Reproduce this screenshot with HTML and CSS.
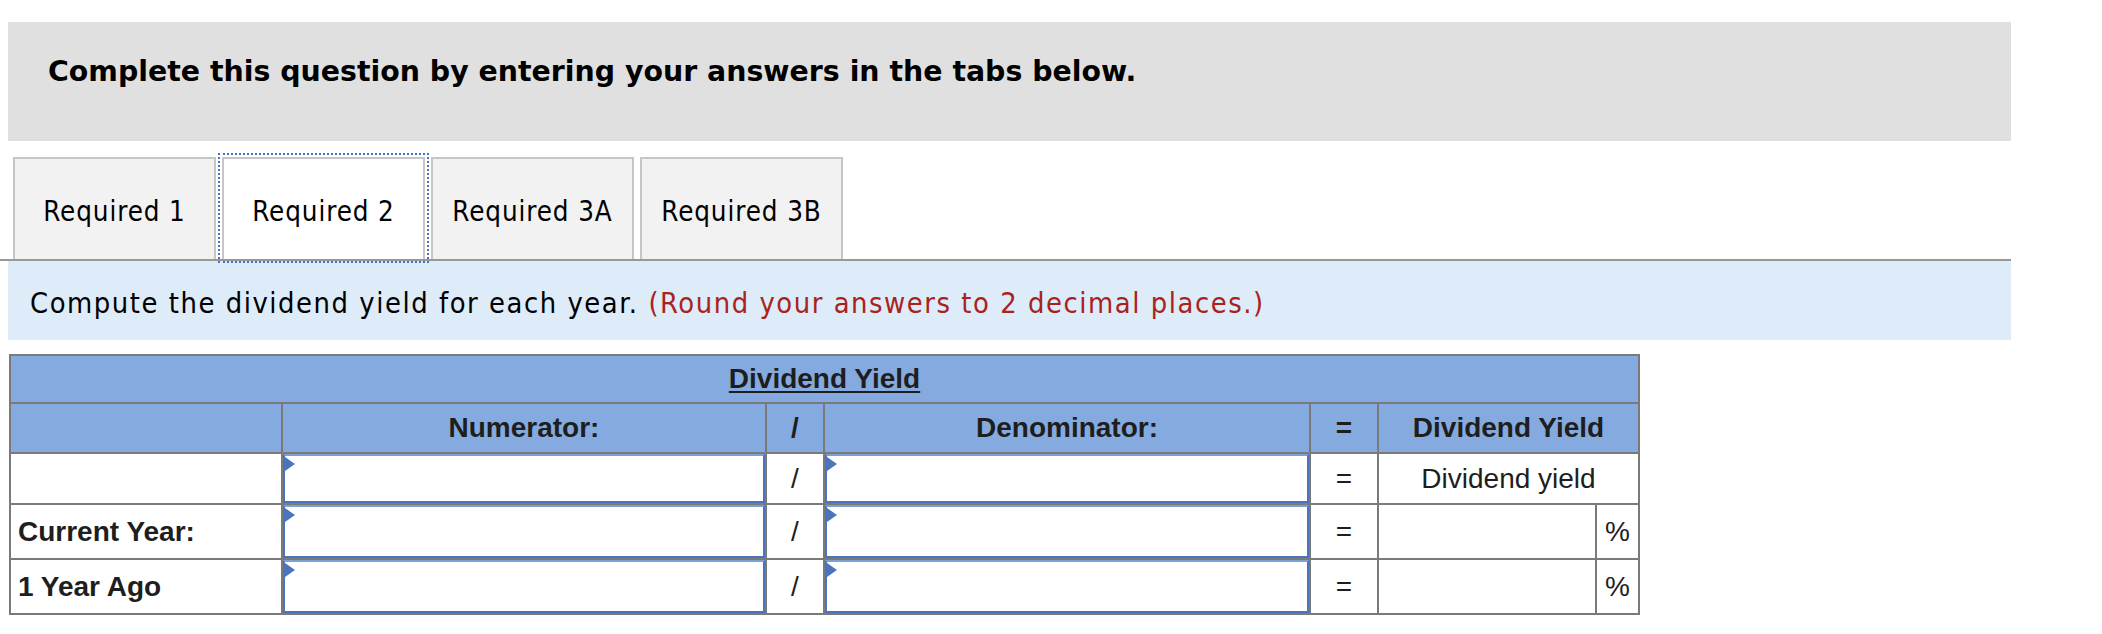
FILE: index.html
```html
<!DOCTYPE html>
<html>
<head>
<meta charset="utf-8">
<link rel="stylesheet" href="styles.css">
</head>
<body>
<div class="page">
  <div class="prompt">Complete this question by entering your answers in the tabs below.</div>
  <div class="tabs">
    <div class="tab">Required 1</div>
    <div class="tab active">Required 2</div>
    <div class="tab">Required 3A</div>
    <div class="tab">Required 3B</div>
  </div>
  <div class="instr">Compute the dividend yield for each year. <span class="red">(Round your answers to 2 decimal places.)</span></div>
  <table class="grid">
    <colgroup>
      <col class="c1"><col class="c2"><col class="c3"><col class="c4"><col class="c5"><col class="c6"><col class="c7">
    </colgroup>
    <tr class="h1"><th colspan="7"><span class="ul">Dividend Yield</span></th></tr>
    <tr class="h2"><th></th><th>Numerator:</th><th>/</th><th>Denominator:</th><th>=</th><th colspan="2">Dividend Yield</th></tr>
    <tr class="r1">
      <td></td>
      <td class="in"><div class="box"><span class="flag"></span></div></td>
      <td class="op">/</td>
      <td class="in"><div class="box"><span class="flag"></span></div></td>
      <td class="op">=</td>
      <td colspan="2" class="ctr">Dividend yield</td>
    </tr>
    <tr class="r2">
      <td class="lbl">Current Year:</td>
      <td class="in"><div class="box"><span class="flag"></span></div></td>
      <td class="op">/</td>
      <td class="in"><div class="box"><span class="flag"></span></div></td>
      <td class="op">=</td>
      <td></td>
      <td class="pct">%</td>
    </tr>
    <tr class="r2">
      <td class="lbl">1 Year Ago</td>
      <td class="in"><div class="box"><span class="flag"></span></div></td>
      <td class="op">/</td>
      <td class="in"><div class="box"><span class="flag"></span></div></td>
      <td class="op">=</td>
      <td></td>
      <td class="pct">%</td>
    </tr>
  </table>
</div>
</body>
</html>
```
FILE: styles.css
```css
html, body { margin: 0; padding: 0; background: #fff; }
body { padding: 0 0 0 8px; }
.page { width: 2003px; padding-top: 22px; }

.prompt {
  background: #e0e0e0;
  height: 119px;
  padding: 33px 0 0 40px;
  box-sizing: border-box;
  font-family: "DejaVu Sans", Verdana, sans-serif;
  font-weight: bold;
  font-size: 28.4px;
  line-height: normal;
  color: #000;
}

.tabs {
  display: flex;
  gap: 6px;
  margin-top: 16px;
  margin-left: -8px;
  padding-left: 13px;
  border-bottom: 2px solid #989898;
  height: 102px;
  align-items: stretch;
}
.tab {
  width: 203px;
  box-sizing: border-box;
  border: 2px solid #c6c6c6;
  border-bottom: none;
  background: #f2f2f2;
  padding-top: 36px;
  text-align: center;
  font-family: "DejaVu Sans Condensed", "DejaVu Sans", sans-serif;
  font-stretch: condensed;
  font-size: 27.5px;
  letter-spacing: 0.9px;
  line-height: normal;
  color: #000;
}
.tab.active {
  background: #fff;
  outline: 2px dotted #4472c4;
  outline-offset: 2px;
  position: relative;
  z-index: 1;
}

.instr {
  background: #deebf8;
  height: 79px;
  box-sizing: border-box;
  padding: 25px 0 0 22px;
  font-family: "DejaVu Sans Condensed", "DejaVu Sans", sans-serif;
  font-stretch: condensed;
  font-size: 28.8px;
  letter-spacing: 1.55px;
  line-height: normal;
  color: #000;
}
.instr .red { color: #a8231c; }

.grid {
  margin-top: 14px;
  margin-left: 1px;
  border-collapse: collapse;
  table-layout: fixed;
  width: 1631px;
  font-family: "Liberation Sans", Arial, sans-serif;
  font-size: 28px;
  color: #1e1e1e;
}
.grid td, .grid th { border: 2px solid #7a7a7a; padding: 0; }
.c1 { width: 272px; }
.c2 { width: 484px; }
.c3 { width: 58px; }
.c4 { width: 486px; }
.c5 { width: 68px; }
.c6 { width: 218px; }
.c7 { width: 43px; }

.h1 th, .h2 th { background: #84aadf; font-weight: bold; }
.h1 { height: 48px; }
.h2 { height: 50px; }
.r1 { height: 51px; }
.r2 { height: 55px; }
.ul { text-decoration: underline; text-underline-offset: 3px; text-decoration-thickness: 2px; }

.op { text-align: center; }
.ctr { text-align: center; }
.pct { text-align: center; }
.lbl { font-weight: bold; padding-left: 7px !important; }

.in { position: relative; }
.box {
  position: absolute;
  inset: 0;
  border: 2px solid #4a74bc;
  border-top-color: #7c9fd6;
  background: #fff;
}
.flag {
  position: absolute;
  left: 0;
  top: 1px;
  width: 0; height: 0;
  border-top: 7px solid transparent;
  border-bottom: 7px solid transparent;
  border-left: 10px solid #4a74bc;
}
```
